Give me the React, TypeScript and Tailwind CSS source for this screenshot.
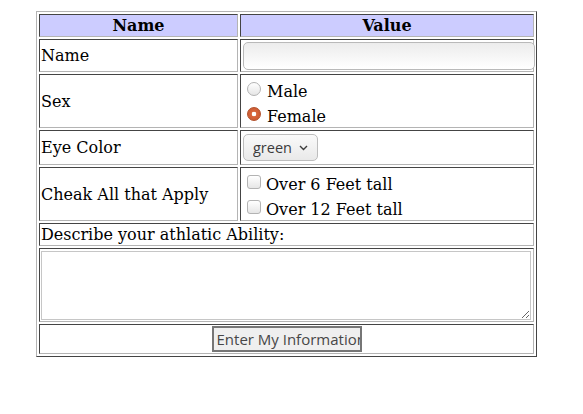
import React from 'react';

const td =
  'border border-t-[#444] border-l-[#444] border-r-[#b4b4b4] border-b-[#b4b4b4] p-px';
const ctl = "font-['Open_Sans','DejaVu_Sans',sans-serif] text-[#3c3c3c]";

export default function App() {
  return (
    <div className="min-h-screen bg-white pt-[11px] pl-[36px] font-['DejaVu_Serif','Liberation_Serif',serif] text-[16px] leading-[19px] text-black">
      <table className="w-[501px] table-fixed border-separate border-spacing-[2px] border border-t-[#b4b4b4] border-l-[#b4b4b4] border-r-[#444] border-b-[#444]">
        <colgroup>
          <col className="w-[199px]" />
          <col className="w-[294px]" />
        </colgroup>
        <thead>
          <tr>
            <th className={`${td} h-[23px] bg-[#ccccff] text-center font-bold`}>Name</th>
            <th className={`${td} h-[23px] bg-[#ccccff] text-center font-bold`}>Value</th>
          </tr>
        </thead>
        <tbody>
          <tr>
            <td className={`${td} h-[33px] text-left`}>Name</td>
            <td className={`${td} h-[33px]`}>
              <input
                type="text"
                className="ml-px block h-[28px] w-[292px] rounded-[5px] border border-[#b9b9b9] bg-gradient-to-b from-[#ececec] to-white"
              />
            </td>
          </tr>
          <tr>
            <td className={`${td} h-[54px]`}>Sex</td>
            <td className={`${td} h-[54px]`}>
              <div className="flex flex-col">
                <label className="flex h-[25px] items-center gap-[6px] pl-[5px]">
                  <input
                    type="radio"
                    name="sex"
                    className="h-[14px] w-[14px] appearance-none rounded-full border border-[#b3b3b3] bg-gradient-to-b from-white to-[#e6e6e6]"
                  />
                  <span className="mt-[6px]">Male</span>
                </label>
                <label className="flex h-[25px] items-center gap-[6px] pl-[5px]">
                  <input
                    type="radio"
                    name="sex"
                    defaultChecked
                    className="h-[14px] w-[14px] appearance-none rounded-full border border-[#b2502a] bg-[radial-gradient(circle,white_0,white_2px,#d8663c_2.6px,#c4552e_100%)]"
                  />
                  <span className="mt-[6px]">Female</span>
                </label>
              </div>
            </td>
          </tr>
          <tr>
            <td className={`${td} h-[35px]`}>Eye Color</td>
            <td className={`${td} h-[35px]`}>
              <div className="relative ml-px inline-block">
                <select
                  defaultValue="green"
                  className={`${ctl} block h-[27px] w-[75px] appearance-none rounded-[5px] border border-[#bdbdbd] bg-gradient-to-b from-[#fafafa] to-[#e9e9e9] pl-[9px] text-[14.5px]`}
                >
                  <option>blue</option>
                  <option>brown</option>
                  <option>green</option>
                </select>
                <svg
                  className="pointer-events-none absolute right-[10px] top-[11px]"
                  width="9"
                  height="6"
                  viewBox="0 0 9 6"
                  fill="none"
                >
                  <path d="M1 1l3.5 3.5L8 1" stroke="#3c3c3c" strokeWidth="1.4" />
                </svg>
              </div>
            </td>
          </tr>
          <tr>
            <td className={`${td} h-[54px]`}>Cheak All that Apply</td>
            <td className={`${td} h-[54px]`}>
              <div className="flex flex-col">
                <label className="flex h-[25px] items-center gap-[5px] pl-[5px]">
                  <input
                    type="checkbox"
                    className="h-[14px] w-[14px] appearance-none rounded-[3px] border border-[#b3b3b3] bg-gradient-to-b from-white to-[#e6e6e6]"
                  />
                  <span className="mt-[6px]">Over 6 Feet tall</span>
                </label>
                <label className="flex h-[25px] items-center gap-[5px] pl-[5px]">
                  <input
                    type="checkbox"
                    className="h-[14px] w-[14px] appearance-none rounded-[3px] border border-[#b3b3b3] bg-gradient-to-b from-white to-[#e6e6e6]"
                  />
                  <span className="mt-[6px]">Over 12 Feet tall</span>
                </label>
              </div>
            </td>
          </tr>
          <tr>
            <td colSpan={2} className={`${td} h-[23px]`}>
              Describe your athlatic Ability:
            </td>
          </tr>
          <tr>
            <td colSpan={2} className={`${td} h-[74px]`}>
              <textarea className="block h-[69px] w-[490px] border border-[#c6c6c6] bg-white" />
            </td>
          </tr>
          <tr>
            <td colSpan={2} className={`${td} h-[29px] text-center`}>
              <button
                type="button"
                className={`${ctl} inline-block h-[26px] w-[150px] overflow-hidden whitespace-nowrap border-2 border-[#767676] bg-[#efefef] pl-[3px] text-left align-middle text-[15px] text-[#474747]`}
              >
                Enter My Information
              </button>
            </td>
          </tr>
        </tbody>
      </table>
    </div>
  );
}
